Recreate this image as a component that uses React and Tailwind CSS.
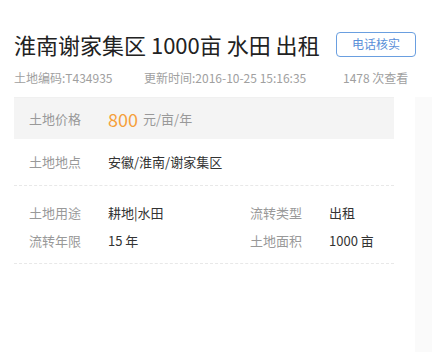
import React from "react";

const Campo = ({ label, children }) => (
  <div className="flex items-center h-[28px]">
    <span className="w-[79px] text-[13px] text-[#999]">{label}</span>
    <span className="text-[13px] text-[#333]">{children}</span>
  </div>
);

const App = () => {
  return (
    <div className="w-[432px] h-[352px] bg-white overflow-hidden font-['Noto_Sans_CJK_SC',sans-serif]">
      {/* cabecera */}
      <div className="pl-[14px] pt-[29px]">
        <div className="flex items-center h-[30px]">
          <h1 className="text-[22px] leading-[30px] text-[#222] whitespace-nowrap">
            淮南谢家集区 1000亩 水田 出租
          </h1>
          <button className="ml-auto mr-[16px] w-[80px] h-[25px] border border-[#6a9fe0] rounded-[4px] text-[12px] text-[#5a8fd8]">
            电话核实
          </button>
        </div>
        <div className="flex mt-[10px] h-[18px] items-center text-[12px] text-[#a0a0a0] whitespace-nowrap">
          <span className="w-[130px]">土地编码:T434935</span>
          <span className="w-[199px]">更新时间:2016-10-25 15:16:35</span>
          <span>1478 次查看</span>
        </div>
      </div>

      <div className="flex mt-[10px]">
        <div className="w-[415px] pl-[14px] pr-[21px]">
          <div className="border-t border-[#f0f0f0]" />
          {/* precio */}
          <div className="flex items-center h-[41px] bg-[#f4f4f4] pl-[15px]">
            <span className="w-[79px] text-[13px] text-[#999]">土地价格</span>
            <span className="text-[18px] text-[#f5a03c] leading-none">800</span>
            <span className="ml-[5px] text-[13px] text-[#999]">元/亩/年</span>
          </div>
          {/* ubicación */}
          <div className="flex items-center h-[47px] pl-[15px] border-b border-dashed border-[#e8e8e8]">
            <span className="w-[79px] text-[13px] text-[#999]">土地地点</span>
            <span className="text-[13px] text-[#333]">安徽/淮南/谢家集区</span>
          </div>
          {/* datos */}
          <div className="grid grid-cols-[221px_1fr] pl-[15px] pt-[13px] pb-[8px] border-b border-dashed border-[#e8e8e8]">
            <Campo label="土地用途">耕地|水田</Campo>
            <Campo label="流转类型">出租</Campo>
            <Campo label="流转年限">15 年</Campo>
            <Campo label="土地面积">1000 亩</Campo>
          </div>
        </div>
        <div className="flex-1 h-[260px] bg-[#fafafa]" />
      </div>
    </div>
  );
};

export default App;
